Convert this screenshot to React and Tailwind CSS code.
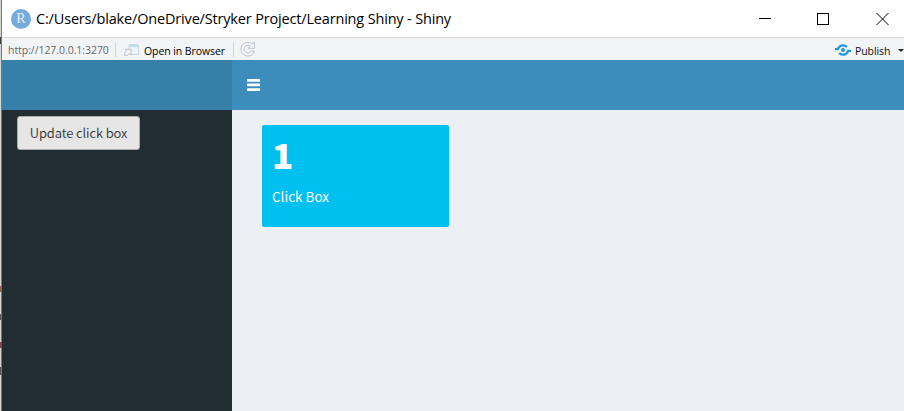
function TitleBar() {
  return (
    <div className="flex h-[37px] shrink-0 items-center bg-white">
      <div className="ml-[9px] flex size-5 items-center justify-center rounded-full bg-[#75aadb] font-['Liberation_Serif',serif] text-[14px] leading-none text-[#e8f1fa]">
        R
      </div>
      <div className={'ml-[5px] font-["Open_Sans","Noto_Sans",sans-serif] whitespace-nowrap text-[14.5px] leading-5 tracking-[-0.17px] text-black'}>
        C:/Users/blake/OneDrive/Stryker Project/Learning Shiny - Shiny
      </div>
      <svg className="ml-auto mr-[15px] h-3 w-[131px]" viewBox="0 0 131 12" fill="none" stroke="#000" shapeRendering="crispEdges">
        <path d="M1 5.5h12" />
        <rect x="59.5" y=".5" width="11" height="11" />
        <path d="M118.5 0l12 12M130.5 0l-12 12" shapeRendering="auto" />
      </svg>
    </div>
  );
}

function Toolbar() {
  return (
    <div className={'flex h-[23px] shrink-0 items-center border-t border-[#d6dadc] bg-[#f3f4f6] font-["Open_Sans","Noto_Sans",sans-serif] text-[10.5px] leading-4'}>
      <span className="ml-[6px] mt-[2px] w-[101px] whitespace-nowrap tracking-[-0.05px] text-[#666]">http://127.0.0.1:3270</span>
      <span className="ml-[6px] h-[15px] w-px bg-[#d0d4d7]" />
      <svg className="ml-[8px] mt-px h-3 w-4" viewBox="0 0 16 12">
        <path d="M5 .5h8.5a1 1 0 0 1 1 1v9h-9.5z" fill="#edf5fb" stroke="#c5d9e8" />
        <path d="M5 1h9.5v2.2H5z" fill="#c3ddee" />
        <path d="M.6 11.3V8.6l2-2L1.4 5.3h5.7V11L5.6 9.5 3.8 11.3z" fill="#f4f6f8" stroke="#b1bbc5" strokeWidth=".9" />
      </svg>
      <span className="ml-[4px] mt-[3px] w-[82px] whitespace-nowrap tracking-[-0.08px] text-black">Open in Browser</span>
      <span className="ml-[7px] h-[15px] w-px bg-[#d0d4d7]" />
      <svg className="ml-[6px] h-4 w-4" viewBox="0 0 16 16">
        <path d="M12.2 3 14.5 1v6.3H8.3l2.2-2.2A3.9 3.9 0 1 0 11.2 10h3.2A6.9 6.9 0 1 1 12.2 3z" fill="#f4f6f9" stroke="#b3bfd0" strokeWidth=".9" />
      </svg>
      <svg className="ml-auto mt-px h-3 w-4" viewBox="0 0 16 12" fill="none" stroke="#2099d8">
        <circle cx="8" cy="6" r="2" fill="#2099d8" stroke="none" />
        <path d="M0 5.2h2.9C3.8 2.5 5.6 1.3 8 1.3c1.7 0 3 .6 3.9 1.7M16 6.8h-2.9c-.9 2.7-2.7 3.9-5.1 3.9-1.7 0-3-.6-3.9-1.7" strokeWidth="2.3" />
      </svg>
      <span className="ml-[4px] mt-[3px] w-[36px] whitespace-nowrap tracking-[-0.1px] text-[#111]">Publish</span>
      <span className="ml-[7px] mt-[2px] h-0 w-[5px] overflow-hidden border-x-[3px] border-t-[3px] border-x-transparent border-t-[#222]" />
    </div>
  );
}

function Sidebar() {
  return (
    <aside className="w-[230px] shrink-0 bg-[#222d32]">
      <div className="h-[50px] bg-[#367fa9]" />
      <button className={'ml-[15px] mt-[6px] flex h-[34px] w-[123px] items-center justify-center rounded-[3px] border border-[#adadad] bg-[#e6e6e6] font-["Noto_Sans_CJK_SC",sans-serif] font-[350] text-[13px] leading-5 text-[#333]'}>
        <span className="whitespace-nowrap tracking-[-0.1px]">Update click box</span>
      </button>
    </aside>
  );
}

function ValueBox() {
  return (
    <div className={'ml-[30px] mt-[15px] h-[102px] w-[187px] rounded-[2px] bg-[#00c0ef] px-[10px] pt-[8px] font-["Noto_Sans_CJK_SC",sans-serif] text-white'}>
      <h3 className="text-[35px] leading-[42px] font-black">1</h3>
      <p className="mt-[11px] text-[13.5px] leading-5">Click Box</p>
    </div>
  );
}

export default function App() {
  return (
    <div className="flex h-[411px] w-[904px] overflow-hidden">
      <div className="flex w-[2px] shrink-0 flex-col border-r border-[#6f7b7d] bg-[#d3d6d3]">
        <span className="mt-[37px] h-[7px] w-px bg-[#444]" />
        <span className="mt-[242px] h-[6px] w-[2px] bg-[#8d6257]" />
        <span className="mt-[22px] h-[6px] w-px bg-[#555]" />
        <span className="mt-[22px] h-[6px] w-[2px] bg-[#7d4a4a]" />
        <span className="mt-[19px] h-[8px] w-px bg-[#555]" />
      </div>
      <div className="flex min-w-0 flex-1 flex-col">
        <TitleBar />
        <Toolbar />
        <div className="flex min-h-0 flex-1">
          <Sidebar />
          <main className="flex-1 bg-[#ecf0f5]">
            <div className="flex h-[50px] items-center bg-[#3c8dbc] pl-[15px]">
              <svg className="h-3 w-[13px]" viewBox="0 0 13 12" fill="#fff">
                <rect width="13" height="2.7" rx=".5" />
                <rect y="4.6" width="13" height="2.7" rx=".5" />
                <rect y="9.2" width="13" height="2.7" rx=".5" />
              </svg>
            </div>
            <ValueBox />
          </main>
        </div>
      </div>
    </div>
  );
}
